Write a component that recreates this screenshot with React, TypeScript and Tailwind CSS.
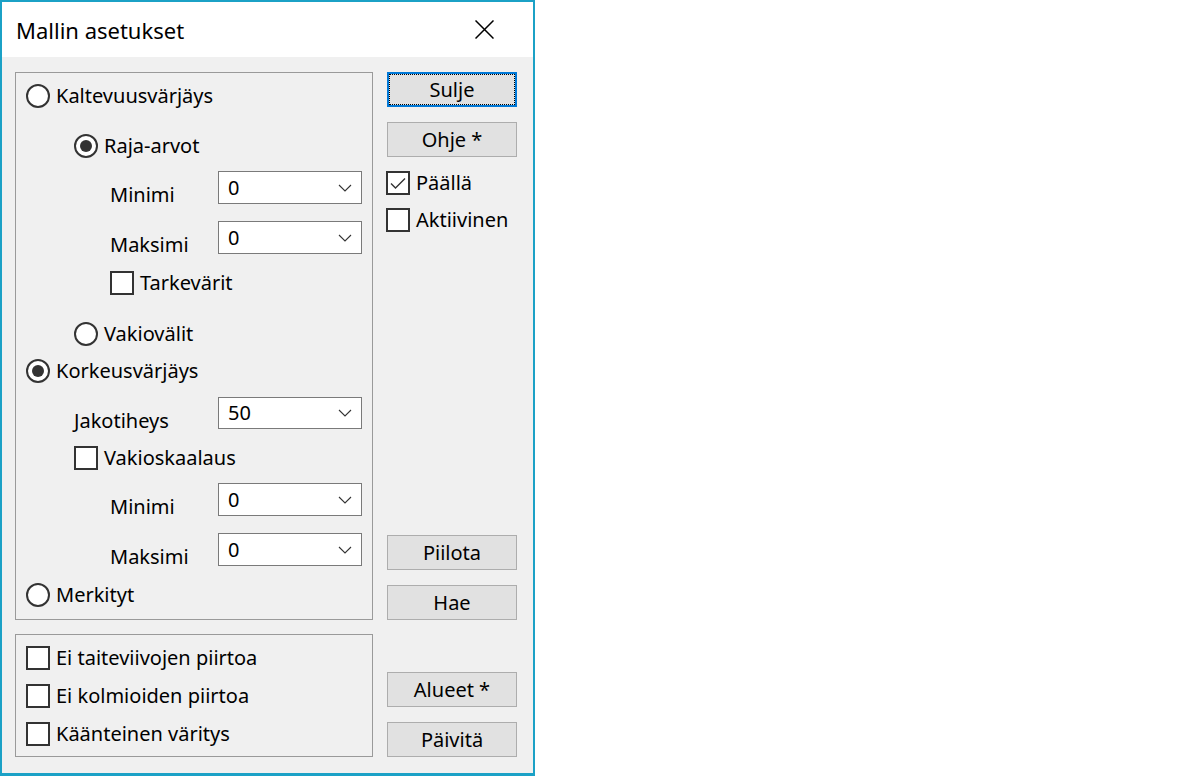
import React from "react";

const font = { fontFamily: '"Noto Sans", "Open Sans", sans-serif' };

function Radio({ checked, label }: { checked?: boolean; label: string }) {
  return (
    <div className="flex items-center gap-[6px] h-[24px]">
      <div className="w-[24px] h-[24px] rounded-full border-2 border-[#333333] bg-white flex items-center justify-center shrink-0">
        {checked && <div className="w-[12px] h-[12px] rounded-full bg-[#333333]" />}
      </div>
      <span className="text-[20px] leading-[24px] text-black whitespace-nowrap">{label}</span>
    </div>
  );
}

function Check({ checked, label }: { checked?: boolean; label: string }) {
  return (
    <div className="flex items-center gap-[6px] h-[24px]">
      <div className="w-[24px] h-[24px] border-2 border-[#333333] bg-white shrink-0 flex items-center justify-center">
        {checked && (
          <svg width="20" height="20" viewBox="0 0 20 20">
            <path d="M3 10.5 L7.5 15 L17 5.5" fill="none" stroke="#333333" strokeWidth="1.4" />
          </svg>
        )}
      </div>
      <span className="text-[20px] leading-[24px] text-black whitespace-nowrap">{label}</span>
    </div>
  );
}

function Combo({ value, h }: { value: string; h: string }) {
  return (
    <div className={`w-[144px] ${h} bg-white border border-[#7a7a7a] flex items-center justify-between pl-[9px] pr-[9px] shrink-0`}>
      <span className="text-[20px] leading-[24px] text-black">{value}</span>
      <svg width="14" height="8" viewBox="0 0 14 8">
        <path d="M1 1 L7 7 L13 1" fill="none" stroke="#333333" strokeWidth="1.1" />
      </svg>
    </div>
  );
}

function ComboRow({ label, value, lw, h = "h-[33px]" }: { label: string; value: string; lw: string; h?: string }) {
  return (
    <div className={`flex items-start ${h}`}>
      <span className={`${lw} mt-[12px] text-[20px] leading-[24px] text-black whitespace-nowrap`}>{label}</span>
      <Combo value={value} h={h} />
    </div>
  );
}

function Btn({ label, focused, className = "" }: { label: string; focused?: boolean; className?: string }) {
  return (
    <div
      className={
        focused
          ? `w-[130px] h-[35px] bg-[#e1e1e1] border-2 border-[#0078d7] outline-1 outline-dotted outline-black -outline-offset-3 flex items-center justify-center ${className}`
          : `w-[130px] h-[35px] bg-[#e1e1e1] border border-[#adadad] flex items-center justify-center ${className}`
      }
    >
      <span className="text-[20px] leading-[24px] text-black">{label}</span>
    </div>
  );
}

export default function App() {
  return (
    <div className="w-full h-[776px] bg-white" style={font}>
      <div className="w-[535px] h-[776px] border-2 border-b-[3px] border-[#1ba1c6] flex flex-col bg-[#f0f0f0]">
        {/* Title bar */}
        <div className="h-[55px] bg-white flex items-center justify-between pl-[14px] pr-[39px] shrink-0">
          <span className="text-[22px] leading-[28px] text-black">Mallin asetukset</span>
          <svg width="19" height="19" viewBox="0 0 19 19">
            <path d="M0.5 0.5 L18.5 18.5 M18.5 0.5 L0.5 18.5" stroke="#000" strokeWidth="1.5" fill="none" />
          </svg>
        </div>

        {/* Body */}
        <div className="flex-1 flex flex-col pt-[15px] pl-[13px] pr-[16px] pb-[16px]">
          {/* Row A */}
          <div className="flex gap-[14px] h-[548px]">
            <div className="w-[358px] h-full border border-[#9a9a9a] flex flex-col pt-[11px]">
              <div className="ml-[10px]"><Radio label="Kaltevuusvärjäys" /></div>
              <div className="ml-[58px] mt-[26px]"><Radio checked label="Raja-arvot" /></div>
              <div className="mt-[13px] ml-[94px]"><ComboRow label="Minimi" value="0" lw="w-[108px]" /></div>
              <div className="mt-[17px] ml-[94px]"><ComboRow label="Maksimi" value="0" lw="w-[108px]" /></div>
              <div className="ml-[94px] mt-[17px]"><Check label="Tarkevärit" /></div>
              <div className="ml-[58px] mt-[27px]"><Radio label="Vakiovälit" /></div>
              <div className="ml-[10px] mt-[13px]"><Radio checked label="Korkeusvärjäys" /></div>
              <div className="mt-[14px] ml-[58px]"><ComboRow label="Jakotiheys" value="50" lw="w-[144px]" h="h-[32px]" /></div>
              <div className="ml-[58px] mt-[17px]"><Check label="Vakioskaalaus" /></div>
              <div className="mt-[13px] ml-[94px]"><ComboRow label="Minimi" value="0" lw="w-[108px]" /></div>
              <div className="mt-[17px] ml-[94px]"><ComboRow label="Maksimi" value="0" lw="w-[108px]" /></div>
              <div className="ml-[10px] mt-[17px]"><Radio label="Merkityt" /></div>
            </div>
            <div className="w-[130px] h-full flex flex-col justify-between">
              <div className="flex flex-col">
                <Btn label="Sulje" focused />
                <Btn label="Ohje *" className="mt-[15px]" />
                <div className="mt-[14px] -ml-[1px]"><Check checked label="Päällä" /></div>
                <div className="mt-[13px] -ml-[1px]"><Check label="Aktiivinen" /></div>
              </div>
              <div className="flex flex-col">
                <Btn label="Piilota" />
                <Btn label="Hae" className="mt-[15px]" />
              </div>
            </div>
          </div>

          {/* Row B */}
          <div className="flex gap-[14px] h-[123px] mt-[14px]">
            <div className="w-[358px] h-full border border-[#9a9a9a] flex flex-col pt-[11px] pl-[10px] gap-[14px]">
              <Check label="Ei taiteviivojen piirtoa" />
              <Check label="Ei kolmioiden piirtoa" />
              <Check label="Käänteinen väritys" />
            </div>
            <div className="w-[130px] h-full flex flex-col justify-end">
              <Btn label="Alueet *" />
              <Btn label="Päivitä" className="mt-[15px]" />
            </div>
          </div>
        </div>
      </div>
    </div>
  );
}
